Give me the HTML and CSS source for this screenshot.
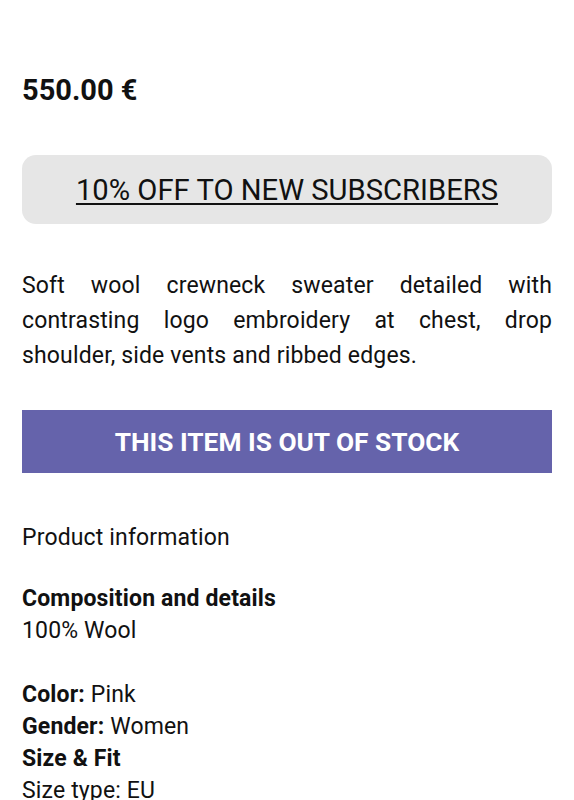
FILE: index.html
```html
<!DOCTYPE html>
<html>
<head>
<meta charset="utf-8">
<link rel="stylesheet" href="styles.css">
</head>
<body>
<main class="product">
  <div class="price">550.00 €</div>
  <a class="promo" href="#"><span>10% OFF TO NEW SUBSCRIBERS</span></a>
  <p class="desc">Soft wool crewneck sweater detailed with contrasting logo embroidery at chest, drop shoulder, side vents and ribbed edges.</p>
  <div class="stock">THIS ITEM IS OUT OF STOCK</div>
  <div class="info-title">Product information</div>
  <div class="details">
    <div class="line"><b>Composition and details</b></div>
    <div class="line">100% Wool</div>
    <div class="line blank"></div>
    <div class="line"><b>Color:</b> Pink</div>
    <div class="line"><b>Gender:</b> Women</div>
    <div class="line"><b>Size &amp; Fit</b></div>
    <div class="line">Size type: EU</div>
  </div>
</main>
</body>
</html>
```

FILE: styles.css
```css
html, body {
  margin: 0;
  padding: 0;
  background: #ffffff;
}
body {
  font-family: Roboto, "Liberation Sans", sans-serif;
  color: #111111;
}
.product {
  padding: 70px 22px 0 22px;
  display: flex;
  flex-direction: column;
}
.price {
  font-size: 29px;
  font-weight: 700;
  line-height: 40px;
  height: 40px;
}
.promo {
  margin-top: 45px;
  height: 69px;
  background: #e6e6e6;
  border-radius: 14px;
  display: flex;
  align-items: center;
  justify-content: center;
  color: #111111;
  text-decoration: underline;
  text-decoration-thickness: 2px;
  text-underline-offset: 3px;
  font-size: 29.2px;
}
.desc {
  margin: 44px 0 0 0;
  font-size: 23px;
  letter-spacing: 0.15px;
  line-height: 35px;
  text-align: justify;
}
.stock {
  margin-top: 37px;
  height: 63px;
  background: #6563ab;
  color: #ffffff;
  font-weight: 700;
  font-size: 26.3px;
  display: flex;
  align-items: center;
  justify-content: center;
}
.info-title {
  margin-top: 49px;
  font-size: 23px;
  letter-spacing: 0.15px;
  line-height: 32px;
}
.details {
  margin-top: 29px;
  font-size: 23px;
  letter-spacing: 0.15px;
  line-height: 32px;
}
.line.blank {
  height: 32px;
}
.line b {
  font-weight: 700;
}
```
